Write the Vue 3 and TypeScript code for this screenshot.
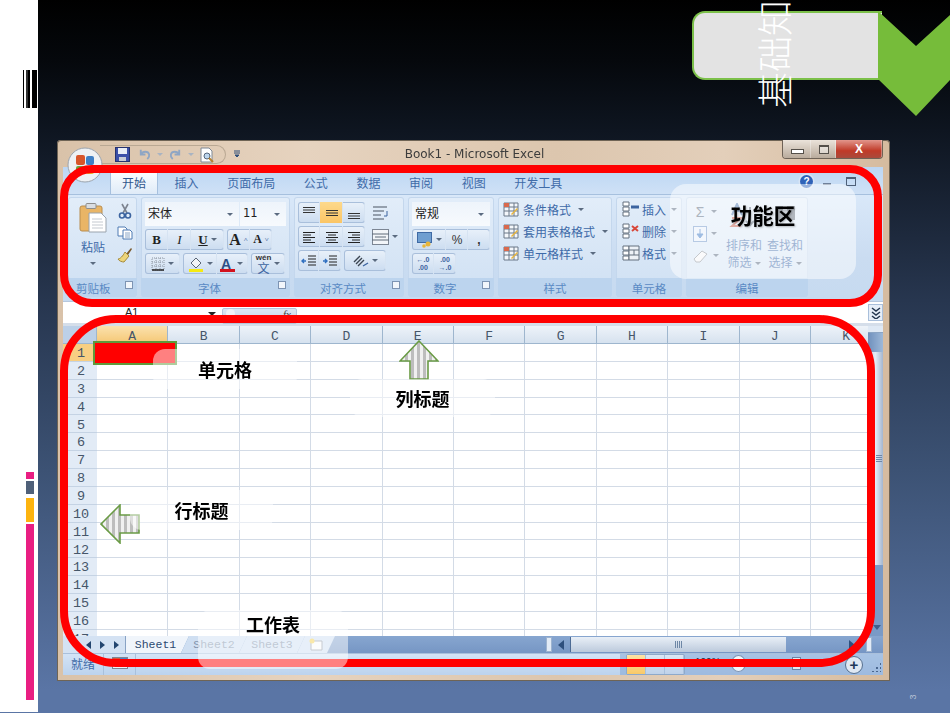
<template>
  <div class="slide">
    <aside class="rail">
      <div class="barcode"></div>
      <div class="bars">
        <span class="bar pink-sm"></span>
        <span class="bar slate"></span>
        <span class="bar amber"></span>
        <span class="bar pink-lg"></span>
      </div>
    </aside>

    <main class="stage">
      <section class="window">
        <header class="titlebar">
          <div class="orb">
            <svg viewBox="0 0 36 36" width="36" height="36">
              <circle cx="18" cy="18" r="17" fill="#eef1f4" stroke="#9aa3ad" />
              <rect x="9" y="8" width="9" height="10" rx="2" fill="#d8552a" />
              <rect x="19" y="9" width="8" height="9" rx="2" fill="#3f7fc4" />
              <rect x="9" y="19" width="9" height="8" rx="2" fill="#6ea33c" />
              <rect x="19" y="19" width="8" height="8" rx="2" fill="#e9b32c" />
            </svg>
          </div>
          <div class="qat">
            <svg viewBox="0 0 15 15" width="15" height="15">
              <rect x="0.5" y="0.5" width="14" height="14" fill="#3b4fa8" stroke="#26336f" />
              <rect x="3" y="1" width="9" height="6" fill="#e8edf6" />
              <rect x="4" y="10" width="7" height="4" fill="#c7ccd6" />
            </svg>
            <svg class="qat-undo" viewBox="0 0 14 14" width="13" height="13">
              <path d="M3 2v5h5M3 7c2-4 8-4 9 0 .5 2-1 4-2 5" fill="none" stroke="#8fa6c4" stroke-width="2" />
            </svg>
            <i class="caret soft qat-caret"></i>
            <svg class="qat-redo" viewBox="0 0 14 14" width="13" height="13">
              <path d="M11 2v5H6M11 7C9 3 3 3 2 7c-.5 2 1 4 2 5" fill="none" stroke="#8fa6c4" stroke-width="2" />
            </svg>
            <i class="caret soft qat-caret"></i>
            <svg class="qat-preview" viewBox="0 0 16 16" width="16" height="16">
              <path d="M2 1h8l3 3v11H2z" fill="#fff" stroke="#7f8894" />
              <circle cx="8" cy="9" r="3" fill="#bcd6ee" stroke="#56677c" />
              <path d="M10 11l4 4" stroke="#b5802f" stroke-width="2" />
            </svg>
          </div>
          <svg class="qat-more" viewBox="0 0 8 8" width="8" height="8">
            <path d="M1 1h6M1 3h6M2 5h4l-2 2z" stroke="#2f4f7a" fill="#2f4f7a" stroke-width="1" />
          </svg>
          <span class="app-title">Book1 - Microsoft Excel</span>
          <div class="win-controls">
            <span class="win-btn"><i class="win-min"></i></span>
            <span class="win-btn narrow"><i class="win-max"></i></span>
            <span class="win-btn close">X</span>
          </div>
        </header>

        <nav class="tabs">
          <span v-for="(tab, i) in tabs" :key="tab" class="tab" :class="{ active: i === 0 }">{{ tab }}</span>
          <div class="tabs-right">
            <span class="help">?</span>
            <span class="tab-min"></span>
            <span class="tab-restore"></span>
          </div>
        </nav>

        <div class="ribbon">
          <section class="group w-clip">
            <div class="group-body clip-body">
              <div class="paste">
                <svg viewBox="0 0 28 30" width="28" height="30">
                  <rect x="1" y="3" width="22" height="25" rx="2" fill="#e9b566" stroke="#b98d4f" />
                  <rect x="7" y="0.5" width="10" height="5" rx="1" fill="#d9dde2" stroke="#8d8d8d" />
                  <path d="M10 10h12l5 5v14H10z" fill="#fff" stroke="#9aa3ad" />
                  <path d="M13 16h10M13 19h11M13 22h11M13 25h11" stroke="#c4c9d0" />
                </svg>
                <span class="paste-label">粘贴</span>
                <i class="caret"></i>
              </div>
              <div class="clip-tools">
                <svg viewBox="0 0 14 16" width="14" height="16">
                  <path d="M4 1l5 9M10 1L5 10" stroke="#7d8490" stroke-width="1.6" />
                  <circle cx="4" cy="12.5" r="2.5" fill="none" stroke="#3c64a0" stroke-width="1.6" />
                  <circle cx="10" cy="12.5" r="2.5" fill="none" stroke="#3c64a0" stroke-width="1.6" />
                </svg>
                <svg viewBox="0 0 16 14" width="16" height="14">
                  <path d="M1 1h7l2 2v7H1z" fill="#fff" stroke="#4f7bb3" />
                  <path d="M6 4h7l2 2v7H6z" fill="#fff" stroke="#4f7bb3" />
                  <path d="M8 7h5M8 9h5M8 11h5" stroke="#8aa6c8" />
                </svg>
                <svg viewBox="0 0 16 16" width="16" height="16">
                  <path d="M9 7l5-6 1 1-4 6z" fill="#7a5a2e" />
                  <path d="M8 5l4 4-5 6c-2 0-5-1-6-3 2 0 5-3 7-7z" fill="#ecd57a" stroke="#a58a3a" />
                </svg>
              </div>
            </div>
            <footer class="group-foot spread"><span>剪贴板</span><i class="launcher"></i></footer>
          </section>

          <section class="group w-font">
            <div class="group-body stack">
              <div class="combo-row">
                <div class="combo name"><span>宋体</span><i class="caret"></i></div>
                <div class="combo size"><span>11</span><i class="caret"></i></div>
              </div>
              <div class="ctl-row">
                <div class="seg">
                  <span class="cell w23 fmt bold">B</span>
                  <span class="cell w23 fmt italic">I</span>
                  <span class="cell w33 fmt under">U<i class="caret"></i></span>
                </div>
                <div class="seg">
                  <span class="cell w23 fmt big">A<sup>˄</sup></span>
                  <span class="cell w22 fmt small">A<sup>˅</sup></span>
                </div>
              </div>
              <div class="ctl-row">
                <div class="seg">
                  <span class="cell w35">
                    <svg viewBox="0 0 14 14" width="14" height="14">
                      <path d="M1 1h12v12H1zM5 1v12M9 1v12M1 5h12M1 9h12" fill="none" stroke="#8d96a2" stroke-dasharray="1 1" />
                      <path d="M1 13h12" stroke="#222" stroke-width="1.4" />
                    </svg>
                    <i class="caret"></i>
                  </span>
                </div>
                <div class="seg">
                  <span class="cell w34">
                    <svg viewBox="0 0 16 16" width="16" height="16">
                      <path d="M3 7l5-5 5 5-5 5z" fill="#f2f4f7" stroke="#5a6676" />
                      <rect x="1" y="13" width="14" height="3" fill="#f5ea12" />
                    </svg>
                    <i class="caret"></i>
                  </span>
                  <span class="cell w31 color-a"><b>A</b><i class="red-line"></i><i class="caret"></i></span>
                </div>
                <div class="seg">
                  <span class="cell w34 wen">
                    <span class="wen-text"><em>wén</em><b>文</b></span>
                    <i class="caret"></i>
                  </span>
                </div>
              </div>
            </div>
            <footer class="group-foot center-foot"><span>字体</span><i class="launcher"></i></footer>
          </section>

          <section class="group w-align">
            <div class="group-body stack">
              <div class="ctl-row">
                <div class="seg">
                  <span class="cell w22">
                    <svg viewBox="0 0 14 14" width="14" height="14"><path d="M1 1.5h12M1 4h12M1 6.5h12" stroke="#333" /></svg>
                  </span>
                  <span class="cell w23 on">
                    <svg viewBox="0 0 14 14" width="14" height="14"><path d="M1 4.5h12M1 7h12M1 9.5h12" stroke="#333" /></svg>
                  </span>
                  <span class="cell w22">
                    <svg viewBox="0 0 14 14" width="14" height="14"><path d="M1 7.5h12M1 10h12M1 12.5h12" stroke="#333" /></svg>
                  </span>
                </div>
                <svg class="loose" viewBox="0 0 17 16" width="17" height="16">
                  <path d="M1 2h14M1 6h11M1 10h8M1 14h11" stroke="#7c8694" stroke-width="1.4" />
                  <path d="M15 6v5h-3" fill="none" stroke="#3c64a0" />
                </svg>
              </div>
              <div class="ctl-row">
                <div class="seg">
                  <span class="cell w22">
                    <svg viewBox="0 0 14 14" width="14" height="14"><path d="M1 2.5h12M1 5h8M1 7.5h12M1 10h8M1 12.5h12" stroke="#222" /></svg>
                  </span>
                  <span class="cell w23">
                    <svg viewBox="0 0 14 14" width="14" height="14"><path d="M1 2.5h12M3 5h8M1 7.5h12M3 10h8M1 12.5h12" stroke="#222" /></svg>
                  </span>
                  <span class="cell w22">
                    <svg viewBox="0 0 14 14" width="14" height="14"><path d="M1 2.5h12M5 5h8M1 7.5h12M5 10h8M1 12.5h12" stroke="#222" /></svg>
                  </span>
                </div>
                <svg class="loose" viewBox="0 0 17 16" width="17" height="16">
                  <rect x="0.5" y="0.5" width="16" height="15" fill="#f2f5f9" stroke="#7c8694" />
                  <path d="M0 5h17M0 11h17M3 8h11" stroke="#5e6a78" />
                </svg>
                <i class="caret"></i>
              </div>
              <div class="ctl-row">
                <div class="seg">
                  <span class="cell w21">
                    <svg viewBox="0 0 16 14" width="16" height="14"><path d="M7 2h8M7 5h8M7 8h8M7 11h8" stroke="#222" /><path d="M5 7H1m2-2L1 7l2 2" fill="none" stroke="#2f6fc0" stroke-width="1.4" /></svg>
                  </span>
                  <span class="cell w22">
                    <svg viewBox="0 0 16 14" width="16" height="14"><path d="M7 2h8M7 5h8M7 8h8M7 11h8" stroke="#222" /><path d="M1 7h4M3 5l2 2-2 2" fill="none" stroke="#2f6fc0" stroke-width="1.4" /></svg>
                  </span>
                </div>
                <div class="seg">
                  <span class="cell w42">
                    <svg viewBox="0 0 16 14" width="16" height="14"><path d="M1 8l6-6M3 10l6-6M5 12l6-6" stroke="#3b4552" stroke-width="1.4" /><path d="M10 12l5-3" stroke="#3c64a0" stroke-width="1.4" /></svg>
                    <i class="caret"></i>
                  </span>
                </div>
              </div>
            </div>
            <footer class="group-foot center-foot"><span>对齐方式</span><i class="launcher"></i></footer>
          </section>

          <section class="group w-number">
            <div class="group-body stack">
              <div class="combo-row">
                <div class="combo full"><span>常规</span><i class="caret"></i></div>
              </div>
              <div class="ctl-row">
                <div class="seg">
                  <span class="cell w34">
                    <svg viewBox="0 0 16 16" width="16" height="16">
                      <rect x="0.5" y="0.5" width="14" height="10" fill="#6f9ed0" stroke="#3f6aa5" />
                      <circle cx="11" cy="12" r="2.5" fill="#e7b53a" />
                      <circle cx="7" cy="14" r="1.8" fill="#e7b53a" />
                    </svg>
                    <i class="caret"></i>
                  </span>
                  <span class="cell w22 pct">%</span>
                  <span class="cell w22 pct bold">,</span>
                </div>
              </div>
              <div class="ctl-row">
                <div class="seg">
                  <span class="cell w22 dec"><em>←.0</em><em>.00</em></span>
                  <span class="cell w22 dec"><em>.00</em><em>→.0</em></span>
                </div>
              </div>
            </div>
            <footer class="group-foot center-foot"><span>数字</span><i class="launcher"></i></footer>
          </section>

          <section class="group w-styles">
            <div class="group-body list">
              <div v-for="item in styleItems" :key="item" class="list-item">
                <svg viewBox="0 0 16 16" width="16" height="16">
                  <path d="M1 2h14v13H1zM1 6h14M1 10h14M6 2v13M11 2v13" fill="#f4f7fb" stroke="#6b7889" />
                  <rect x="1" y="2" width="5" height="4" fill="#d9694d" />
                  <path d="M8 13l6-6 1 1-6 6z" fill="#e9b53a" />
                </svg>
                <span>{{ item }}</span>
                <i class="caret"></i>
              </div>
            </div>
            <footer class="group-foot center-foot solo"><span>样式</span></footer>
          </section>

          <section class="group w-cells">
            <div class="group-body list cells-list">
              <div v-for="item in cellItems" :key="item.label" class="list-item">
                <svg viewBox="0 0 18 16" width="18" height="16">
                  <path d="M1 1h6v4H1zM1 6h6v4H1zM1 11h6v4H1z" fill="#fff" stroke="#65717f" />
                  <path v-if="item.kind === 'add'" d="M9 6h8" stroke="#3c64a0" stroke-width="3" />
                  <path v-else-if="item.kind === 'del'" d="M10 3l6 5M16 3l-6 5" stroke="#d8473a" stroke-width="2" />
                  <path v-else d="M7 1h10v14H7zM7 5h10M7 10h10M12 5v5" fill="#eef2f7" stroke="#65717f" />
                </svg>
                <span>{{ item.label }}</span>
                <i class="caret"></i>
              </div>
            </div>
            <footer class="group-foot center-foot solo"><span>单元格</span></footer>
          </section>

          <section class="group w-edit">
            <div class="group-body edit-body">
              <div class="edit-tools">
                <div class="edit-tool"><span class="sigma">Σ</span><i class="caret"></i></div>
                <div class="edit-tool">
                  <svg viewBox="0 0 14 16" width="14" height="16">
                    <rect x="0.5" y="0.5" width="13" height="15" fill="#e6eefa" stroke="#6e95c8" />
                    <path d="M7 3v7M4 8l3 4 3-4z" fill="#3c78c4" stroke="#3c78c4" />
                  </svg>
                  <i class="caret"></i>
                </div>
                <div class="edit-tool">
                  <svg viewBox="0 0 16 14" width="16" height="14">
                    <path d="M1 10l8-8 5 3-7 8H3z" fill="#f5f5f7" stroke="#8a9099" />
                  </svg>
                  <i class="caret"></i>
                </div>
              </div>
              <div class="edit-big">
                <svg viewBox="0 0 30 24" width="30" height="24">
                  <path d="M3 12L8 1l5 11M5 8h6" fill="none" stroke="#4d78b0" stroke-width="2" />
                  <path d="M3 15h9l-9 8h9" fill="none" stroke="#c05a4a" stroke-width="2" />
                  <path d="M21 4v18m-4-4l4 4 4-4" fill="none" stroke="#5f6d80" stroke-width="2" />
                </svg>
                <span>排序和</span>
                <span>筛选<i class="caret"></i></span>
              </div>
              <div class="edit-big">
                <svg viewBox="0 0 30 24" width="30" height="24">
                  <rect x="5" y="3" width="8" height="14" fill="#646e7c" />
                  <rect x="17" y="3" width="8" height="14" fill="#646e7c" />
                  <path d="M13 7h4v6h-4z" fill="#9aa4b2" />
                </svg>
                <span>查找和</span>
                <span>选择<i class="caret"></i></span>
              </div>
            </div>
            <footer class="group-foot center-foot solo"><span>编辑</span></footer>
          </section>
        </div>

        <div class="formula">
          <span class="name-box">A1</span>
          <i class="name-drop"></i>
          <span class="fx-btn"><i class="fx-dot"></i><em>fx</em></span>
          <span class="formula-more">
            <svg viewBox="0 0 10 12" width="10" height="12"><path d="M1 1l4 3 4-3M1 5l4 3 4-3M1 9l4 3 4-3" fill="none" stroke="#23364f" stroke-width="1.5" /></svg>
          </span>
        </div>

        <div class="sheet-area">
          <div class="sheet">
            <span class="head corner"></span>
            <span v-for="(col, i) in columns" :key="col" class="head col-head" :class="{ sel: i === 0 }">{{ col }}</span>
            <template v-for="row in rows" :key="row">
              <span class="head row-head" :class="{ sel: row === 1 }">{{ row }}</span>
              <span v-for="col in columns" :key="col + row" class="cell-box"></span>
            </template>
          </div>
          <div class="vscroll">
            <span class="v-split"></span>
            <span class="v-up"></span>
            <span class="v-thumb"><i></i></span>
            <span class="v-track"><b></b></span>
          </div>
        </div>

        <div class="sheet-tabs">
          <div class="tab-nav">
            <i class="nav first"></i><i class="nav prev"></i><i class="nav next"></i><i class="nav last"></i>
          </div>
          <span class="sheet-tab current">Sheet1</span>
          <span class="sheet-tab">Sheet2</span>
          <span class="sheet-tab">Sheet3</span>
          <span class="sheet-tab new-tab">
            <svg viewBox="0 0 16 14" width="16" height="14">
              <path d="M3 3h11v9H3z" fill="#f7f8fa" stroke="#8d96a2" />
              <circle cx="4" cy="3" r="2.5" fill="#f2d054" />
            </svg>
          </span>
          <div class="hscroll">
            <span class="h-split"></span>
            <i class="h-left"></i>
            <span class="h-thumb"><b></b></span>
            <i class="h-right"></i>
            <span class="h-split end"></span>
          </div>
        </div>

        <footer class="status">
          <span class="ready">就绪</span>
          <span class="macro">
            <svg viewBox="0 0 16 12" width="16" height="12">
              <rect x="0.5" y="0.5" width="15" height="11" fill="#eef2f7" stroke="#7c8694" />
              <rect x="1" y="1" width="7" height="4" fill="#d8573a" />
              <rect x="8" y="1" width="7" height="4" fill="#4d83c4" />
            </svg>
          </span>
          <div class="status-right">
            <div class="views">
              <span class="view on"></span><span class="view"></span><span class="view"></span>
            </div>
            <span class="zoom-val">100%</span>
            <i class="zoom-knob"></i>
            <i class="zoom-mark"></i>
            <i class="zoom-plus">+</i>
            <i class="grip"></i>
          </div>
        </footer>
      </section>
    </main>

    <!-- things lying over the slide -->
    <div class="badge-box"></div>
    <svg class="chevron" viewBox="0 0 72 105" width="72" height="105">
      <path d="M0 0l38 35L72 4v65l-34 36L0 68z" fill="#76bc3a" />
    </svg>
    <span class="slide-title">基础知</span>
    <span class="page-no">3</span>

    <div class="outline top-outline"></div>
    <div class="outline bottom-outline"></div>

    <div class="picked"></div>

    <svg class="arrow arrow-up" viewBox="0 0 40 40" width="40" height="40">
      <path d="M20 1l19 20H29v18H11V21H1z" fill="url(#stripes)" stroke="#6a9b45" stroke-width="1.6" />
      <defs>
        <pattern id="stripes" width="6" height="6" patternUnits="userSpaceOnUse">
          <rect width="6" height="6" fill="#f0f0f0" />
          <rect width="3" height="6" fill="#bdbdbd" />
        </pattern>
      </defs>
    </svg>
    <svg class="arrow arrow-left" viewBox="0 0 40 40" width="40" height="40">
      <path d="M1 20L20 1v10h19v18H20v10z" fill="url(#stripes)" stroke="#6a9b45" stroke-width="1.6" />
    </svg>

    <div v-for="note in notes" :key="note.text" class="note" :class="note.cls">
      <span>{{ note.text }}</span>
    </div>
  </div>
</template>

<script setup lang="ts">
const tabs = ['开始', '插入', '页面布局', '公式', '数据', '审阅', '视图', '开发工具']
const columns = ['A', 'B', 'C', 'D', 'E', 'F', 'G', 'H', 'I', 'J', 'K']
const rows = Array.from({ length: 17 }, (_, i) => i + 1)

const styleItems = ['条件格式', '套用表格格式', '单元格样式']
const cellItems = [
  { label: '插入', kind: 'add' },
  { label: '删除', kind: 'del' },
  { label: '格式', kind: 'fmt' }
]

const notes = [
  { text: '功能区', cls: 'note-ribbon' },
  { text: '单元格', cls: 'note-cell' },
  { text: '列标题', cls: 'note-col' },
  { text: '行标题', cls: 'note-row' },
  { text: '工作表', cls: 'note-sheet' }
]
</script>

<style>
html,
body {
  margin: 0;
  background: #5a75a5;
}
</style>

<style scoped>
.slide {
  position: relative;
  width: 950px;
  height: 713px;
  display: flex;
  overflow: hidden;
  font-family: 'Noto Sans CJK SC', 'Liberation Sans', sans-serif;
  background: linear-gradient(180deg, #000 0, #05080c 60px, #0e1520 130px, #27364f 300px, #3c5274 470px, #5a75a5 690px);
}

i,
em {
  font-style: normal;
}

svg {
  display: block;
  flex-shrink: 0;
}

/* left rail */
.rail {
  width: 38px;
  height: 712px;
  background: #fff;
  padding-top: 70px;
  box-sizing: border-box;
  flex-shrink: 0;
}

.barcode {
  width: 14px;
  height: 38px;
  margin-left: 23px;
  background: linear-gradient(90deg, #000 0 1.5px, #fff 1.5px 3px, #333 3px 5px, #000 5px 7.5px, #fff 7.5px 9px, #000 9px 14px);
}

.bars {
  margin: 364px 0 0 26px;
  width: 8px;
  display: flex;
  flex-direction: column;
}

.bar {
  display: block;
}

.pink-sm {
  height: 7px;
  background: #e91e82;
}

.slate {
  height: 13px;
  margin-top: 2px;
  background: #4f6079;
}

.amber {
  height: 24px;
  margin-top: 4px;
  background: #fdb40f;
}

.pink-lg {
  height: 176px;
  margin-top: 2px;
  background: #e91e82;
}

/* window */
.stage {
  flex: 1;
  padding: 140px 0 0 19px;
}

.window {
  width: 833px;
  height: 541px;
  box-sizing: border-box;
  padding: 0 7px 6px 6px;
  display: flex;
  flex-direction: column;
  border-radius: 4px 4px 0 0;
  background: linear-gradient(90deg, #d9c2a9, #e6d3bf 30%, #dcc6ae 60%, #e3cfba 80%, #d5bb9f);
  box-shadow: inset 0 0 0 1px #6f6455;
  filter: blur(0.35px);
  color: #3e6aa8;
  font-size: 12px;
}

.titlebar {
  height: 27px;
  position: relative;
  display: flex;
  align-items: center;
  flex-shrink: 0;
}

.orb {
  position: absolute;
  left: 4px;
  top: 7px;
  z-index: 2;
}

.qat {
  position: absolute;
  left: 37px;
  top: 5px;
  height: 19px;
  width: 126px;
  box-sizing: border-box;
  padding-left: 15px;
  display: flex;
  align-items: center;
  border: 1px solid #b9a893;
  border-left: 0;
  border-radius: 0 10px 10px 0;
}

.qat-undo {
  margin-left: 8px;
}

.qat-caret {
  margin-left: 6px;
}

.qat-redo {
  margin-left: 6px;
}

.qat-preview {
  margin-left: 5px;
}

.qat-more {
  position: absolute;
  left: 170px;
  top: 10px;
}

.app-title {
  width: 100%;
  text-align: center;
  padding-left: 3px;
  font-family: 'DejaVu Sans', sans-serif;
  font-size: 12px;
  color: #3c3c3c;
  margin-top: 1px;
}

.win-controls {
  position: absolute;
  right: 0;
  top: 0;
  display: flex;
  height: 18px;
  border: 1px solid #6e6256;
  border-top: 0;
  border-radius: 0 0 4px 4px;
  overflow: hidden;
}

.win-btn {
  width: 28px;
  display: grid;
  place-items: center;
  background: linear-gradient(180deg, #ebe3da, #b9ab9c);
  box-shadow: inset -1px 0 0 #fff5;
}

.win-btn.narrow {
  width: 25px;
}

.win-btn.close {
  width: 46px;
  color: #fff;
  font: 700 12px 'Liberation Sans', sans-serif;
  background: linear-gradient(180deg, #e2968c, #c03a28 60%, #a94a3c);
}

.win-min {
  width: 11px;
  height: 3px;
  margin-top: 5px;
  background: #fff;
  border: 1px solid #55504a;
}

.win-max {
  width: 8px;
  height: 6px;
  border: 1px solid #55504a;
  border-top-width: 2px;
  background: #fff6;
}

/* tabs */
.tabs {
  height: 28px;
  flex-shrink: 0;
  display: flex;
  align-items: flex-end;
  gap: 6.6px;
  padding-left: 48px;
  box-sizing: border-box;
  background: linear-gradient(180deg, #bcd6f3, #cfe1f6);
  border-bottom: 1px solid #a6c0de;
}

.tab {
  height: 23px;
  padding: 0 11px;
  display: flex;
  align-items: center;
  white-space: nowrap;
  color: #3f6ba8;
  font-size: 12px;
}

.tab.active {
  color: #30568c;
  border: 1px solid #a6c0de;
  border-bottom: 0;
  margin: 0 -1px;
  border-radius: 3px 3px 0 0;
  background: linear-gradient(180deg, #fbfdff, #dfebf8);
}

.tabs-right {
  margin-left: auto;
  align-self: center;
  display: flex;
  align-items: center;
  width: 83px;
  height: 28px;
  padding-top: 1px;
  box-sizing: border-box;
  flex-shrink: 0;
}

.help {
  width: 13px;
  height: 13px;
  border-radius: 50%;
  background: #2f62b8;
  box-shadow: 0 0 0 1.5px #d7e4f5;
  color: #fff;
  font: 700 10px/13px 'Liberation Sans', sans-serif;
  text-align: center;
}

.tab-min {
  width: 8px;
  height: 2px;
  margin: 6px 0 0 10px;
  background: #6f8099;
}

.tab-restore {
  width: 8px;
  height: 6px;
  margin-left: 15px;
  border: 1px solid #4d5f78;
  border-top-width: 2px;
}

/* ribbon */
.ribbon {
  height: 106px;
  flex-shrink: 0;
  display: flex;
  gap: 4px;
  padding: 2px 0 0 5px;
  box-sizing: border-box;
  background: linear-gradient(180deg, #d9e8f9, #cadcf1 60%, #c6daf0);
}

.group {
  height: 100px;
  display: flex;
  flex-direction: column;
  box-sizing: border-box;
  border-radius: 3px;
  overflow: hidden;
  background: linear-gradient(180deg, #e2edf9, #cfe0f3);
  box-shadow: inset 0 0 0 1px #c4d7ed;
}

.w-clip {
  width: 69px;
}

.w-font {
  width: 149px;
}

.w-align {
  width: 110px;
}

.w-number {
  width: 86px;
}

.w-styles {
  width: 114px;
}

.w-cells {
  width: 66px;
}

.w-edit {
  width: 122px;
}

.group-body {
  flex: 1;
  min-height: 0;
}

.group-foot {
  height: 19px;
  flex-shrink: 0;
  display: flex;
  align-items: center;
  position: relative;
  background: #bcd4ee;
  color: #5a8ac4;
  font-size: 11.5px;
}

.spread {
  padding-left: 8px;
}

.center-foot {
  justify-content: center;
  padding-right: 12px;
}

.center-foot.solo {
  padding-right: 0;
}

.launcher {
  position: absolute;
  right: 4px;
  top: 3px;
  width: 6px;
  height: 6px;
  background: #f2f6fb;
  border: 1px solid #7d94b3;
}

.caret {
  display: inline-block;
  flex-shrink: 0;
  width: 0;
  height: 0;
  border: 3px solid transparent;
  border-top: 3px solid #5b6b80;
  border-bottom: 0;
}

.caret.soft {
  border-top-color: #a9b4c2;
}

.clip-body {
  display: flex;
  padding: 6px 0 0 11px;
  gap: 10px;
}

.paste {
  display: flex;
  flex-direction: column;
  align-items: center;
  width: 28px;
}

.paste-label {
  margin-top: 5px;
  font-size: 12px;
  line-height: 17px;
  white-space: nowrap;
}

.paste .caret {
  margin-top: 7px;
}

.clip-tools {
  display: flex;
  flex-direction: column;
  align-items: center;
  gap: 7px;
}

.stack {
  display: flex;
  flex-direction: column;
  gap: 3px;
  padding: 5px 4px 0;
}

.combo-row {
  display: flex;
  gap: 1px;
  height: 24px;
}

.combo {
  display: flex;
  align-items: center;
  justify-content: space-between;
  padding: 0 6px 0 3px;
  box-sizing: border-box;
  background: linear-gradient(180deg, #eef4fb, #f7fafd);
  color: #222;
  font-size: 12px;
}

.combo span {
  margin-top: -3px;
}

.combo.name {
  width: 94px;
}

.combo.size {
  width: 46px;
  font-family: 'DejaVu Sans', sans-serif;
  font-size: 11.5px;
}

.combo.full {
  width: 78px;
}

.ctl-row {
  display: flex;
  align-items: center;
  gap: 3px;
  height: 21px;
}

.seg {
  display: flex;
  height: 21px;
  box-sizing: border-box;
  box-shadow: inset 0 0 0 1px #a9bfdb;
  border-radius: 3px;
  overflow: hidden;
  background: linear-gradient(180deg, #e9f1fa, #cbdcf0);
}

.cell {
  display: flex;
  align-items: center;
  justify-content: center;
  gap: 3px;
  box-sizing: border-box;
  box-shadow: inset -1px 0 0 #d6e3f2;
}

.cell.on {
  background: linear-gradient(180deg, #fdd98c, #fbc565);
}

.w21 {
  width: 21px;
}

.w22 {
  width: 22px;
}

.w23 {
  width: 23px;
}

.w31 {
  width: 31px;
}

.w33 {
  width: 33px;
}

.w34 {
  width: 34px;
}

.w35 {
  width: 35px;
}

.w42 {
  width: 42px;
}

.fmt {
  color: #222;
  font-family: 'Liberation Serif', serif;
  font-weight: 700;
  font-size: 13px;
}

.italic {
  font-style: italic;
  font-weight: 400;
}

.under {
  text-decoration: underline;
}

.big {
  font-size: 16px;
}

.small {
  font-size: 12px;
}

.fmt sup {
  font-size: 7px;
  line-height: 0;
  color: #3c64a0;
}

.color-a {
  position: relative;
  justify-content: flex-start;
  padding-left: 4px;
  gap: 6px;
}

.color-a b {
  color: #2d4f86;
  font: 700 14px/14px 'Liberation Sans', sans-serif;
}

.red-line {
  position: absolute;
  left: 3px;
  bottom: 2px;
  width: 15px;
  height: 3px;
  background: #d3121e;
}

.wen-text {
  display: flex;
  flex-direction: column;
  align-items: center;
}

.wen-text em {
  color: #333;
  font: 700 8px/8px 'Liberation Sans', sans-serif;
}

.wen-text b {
  color: #3c64a0;
  font-size: 12px;
  line-height: 12px;
  font-weight: 400;
}

.loose {
  margin-left: 4px;
}

.pct {
  color: #333;
  font: 400 12px 'Liberation Sans', sans-serif;
}

.pct.bold {
  font-weight: 700;
}

.dec {
  flex-direction: column;
  gap: 0;
  color: #3c64a0;
  font: 700 7px/8px 'Liberation Sans', sans-serif;
}

.list {
  display: flex;
  flex-direction: column;
  padding: 1px 0 0 5px;
}

.list-item {
  height: 22px;
  display: flex;
  align-items: center;
  gap: 4px;
  white-space: nowrap;
  font-size: 12px;
}

.list-item .caret {
  margin-left: 3px;
}

.cells-list {
  padding-left: 6px;
}

.cells-list .list-item {
  gap: 2px;
}

.edit-body {
  display: flex;
  padding: 6px 0 0 7px;
}

.edit-tools {
  width: 30px;
  display: flex;
  flex-direction: column;
  gap: 5px;
}

.edit-tool {
  height: 17px;
  display: flex;
  align-items: center;
  gap: 4px;
}

.sigma {
  width: 14px;
  font: 400 14px 'Liberation Sans', sans-serif;
  color: #5b6b80;
  text-align: center;
}

.edit-big {
  width: 40px;
  margin-left: 1px;
  display: flex;
  flex-direction: column;
  align-items: center;
  font-size: 12px;
  line-height: 17px;
  white-space: nowrap;
}

.edit-big svg {
  margin-bottom: 9px;
}

.edit-big .caret {
  margin: 0 0 2px 3px;
}

/* formula bar */
.formula {
  height: 25px;
  flex-shrink: 0;
  position: relative;
  background: #fff;
  border-top: 1px solid #b5c7de;
  box-sizing: border-box;
  border-bottom: 3px solid #d5deea;
}

.name-box {
  position: absolute;
  left: 62px;
  top: 4px;
  color: #222;
  font: 11px 'Liberation Sans', sans-serif;
}

.name-drop {
  position: absolute;
  left: 145px;
  top: 10px;
  border: 4px solid transparent;
  border-top: 4px solid #222;
  border-bottom: 0;
}

.fx-btn {
  position: absolute;
  left: 159px;
  top: 6px;
  width: 75px;
  height: 16px;
  border: 1px solid #b5c7de;
  border-radius: 2px;
  background: linear-gradient(180deg, #dde7f3, #c5d5e8);
  box-sizing: border-box;
}

.fx-btn em {
  position: absolute;
  right: 5px;
  top: -1px;
  font: italic 11px 'Liberation Serif', serif;
  color: #444;
}

.fx-dot {
  position: absolute;
  left: 3px;
  top: 0;
  width: 9px;
  height: 9px;
  border-radius: 50%;
  background: #f0f3f7;
}

.formula-more {
  position: absolute;
  right: 0;
  top: 2px;
  width: 15px;
  height: 17px;
  display: grid;
  place-items: center;
  box-sizing: border-box;
  border: 1px solid #a9bfdb;
  background: #e6eef8;
}

/* sheet */
.sheet-area {
  height: 310px;
  flex-shrink: 0;
  display: flex;
  overflow: hidden;
  background: #fff;
}

.sheet {
  width: 805px;
  height: 310px;
  overflow: hidden;
  display: grid;
  grid-template-columns: 34px repeat(11, 71.4px);
  grid-template-rows: 18px repeat(17, 17.87px);
  flex-shrink: 0;
}

.head {
  display: flex;
  align-items: center;
  justify-content: center;
  box-sizing: border-box;
  color: #465669;
  font-family: 'Liberation Mono', monospace;
  font-size: 13px;
  line-height: 1;
  background: #e4ecf7;
  border-right: 1px solid #9eb6ce;
  border-bottom: 1px solid #9eb6ce;
}

.col-head {
  padding-top: 4px;
  background: linear-gradient(180deg, #eef3f9, #d6e2ef);
}

.col-head.sel {
  background: linear-gradient(180deg, #fbe2ae, #f5c775);
}

.row-head {
  border-right: 0;
  border-bottom: 1px solid #c5d3e4;
  background: #e2ebf6;
  padding: 3px 0 0 2px;
  font-size: 13.5px;
}

.row-head.sel {
  background: #f8cf83;
}

.corner {
  background: #bcd0e8;
}

.cell-box {
  box-sizing: border-box;
  border-right: 1px solid #d3dbe6;
  border-bottom: 1px solid #d3dbe6;
}

.vscroll {
  width: 15px;
  flex-shrink: 0;
  display: flex;
  flex-direction: column;
  background: #7a9ac6;
}

.v-split {
  height: 7px;
  background: #dfe9f5;
  border-bottom: 1px solid #8aa4c4;
  box-sizing: border-box;
}

.v-up {
  height: 19px;
  position: relative;
  background: linear-gradient(90deg, #6f90bd, #9db8d8);
}

.v-thumb {
  height: 213px;
  display: grid;
  align-items: center;
  justify-items: end;
  padding-right: 1px;
  background: linear-gradient(90deg, #c9d7e8, #e3ebf5 50%, #a3b6cf);
  box-sizing: border-box;
}

.v-thumb i {
  width: 6px;
  height: 7px;
  background: repeating-linear-gradient(180deg, #6e87a6 0 1px, transparent 1px 2px);
}

.v-track {
  flex: 1;
  position: relative;
}

.v-track b {
  position: absolute;
  right: 2px;
  bottom: 6px;
  border: 4px solid transparent;
  border-top: 5px solid #3e5f8c;
  border-bottom: 0;
}

/* sheet tabs */
.sheet-tabs {
  height: 17px;
  flex-shrink: 0;
  display: flex;
  align-items: stretch;
  background: linear-gradient(180deg, #87a6d0, #7696c4);
}

.tab-nav {
  width: 63px;
  display: flex;
  align-items: center;
  justify-content: flex-end;
  gap: 9px;
  padding-right: 6px;
  box-sizing: border-box;
  background: #d4e2f3;
  border-right: 1px solid #88a2c4;
}

.nav {
  width: 0;
  height: 0;
  border: 4px solid transparent;
}

.nav.first,
.nav.prev {
  border-right: 5px solid #23456f;
  border-left: 0;
}

.nav.next,
.nav.last {
  border-left: 5px solid #23456f;
  border-right: 0;
}

.sheet-tab {
  width: 66px;
  display: flex;
  align-items: center;
  justify-content: center;
  color: #8092ab;
  font-family: 'Liberation Mono', monospace;
  font-size: 11.5px;
  background: #cfdff2;
  clip-path: polygon(8px 0, 100% 0, 100% 0, calc(100% - 8px) 100%, 0 100%);
  margin-right: -8px;
}

.sheet-tab.current {
  color: #2c4a70;
  background: #f0f5fb;
  clip-path: polygon(0 0, 100% 0, 100% 0, calc(100% - 8px) 100%, 0 100%);
  width: 63px;
  padding-right: 4px;
  box-sizing: border-box;
}

.new-tab {
  width: 38px;
}

.hscroll {
  margin-left: auto;
  display: flex;
  align-items: center;
  width: 337px;
  flex-shrink: 0;
}

.h-split {
  width: 6px;
  height: 15px;
  background: #e2ebf6;
  box-sizing: border-box;
  border: 1px solid #9db3cf;
}

.h-split.end {
  margin-left: 11px;
}

.h-left {
  margin: 0 6px 0 6px;
  border: 5px solid transparent;
  border-right: 6px solid #2e4f7d;
  border-left: 0;
}

.h-right {
  margin-left: 63px;
  border: 5px solid transparent;
  border-left: 6px solid #2e4f7d;
  border-right: 0;
}

.h-thumb {
  width: 216px;
  height: 15px;
  display: grid;
  place-items: center;
  background: linear-gradient(180deg, #e9eff7, #bccadc);
  border-left: 1px solid #4d6b94;
  box-sizing: border-box;
}

.h-thumb b {
  width: 8px;
  height: 7px;
  background: repeating-linear-gradient(90deg, #6e87a6 0 1px, transparent 1px 2px);
}

/* status bar */
.status {
  height: 22px;
  flex-shrink: 0;
  display: flex;
  align-items: center;
  box-sizing: border-box;
  border-top: 1px solid #a9c0dc;
  background: linear-gradient(180deg, #d3e3f6, #bcd3ee);
  color: #3f6ba8;
}

.ready {
  width: 41px;
  height: 21px;
  display: flex;
  align-items: center;
  box-sizing: border-box;
  padding: 0 0 2px 8px;
  font-size: 12px;
  border-right: 1px solid #a9c0dc;
}

.macro {
  width: 32px;
  height: 21px;
  display: grid;
  place-items: center;
  box-sizing: border-box;
  padding-bottom: 4px;
  border-right: 1px solid #a9c0dc;
}

.status-right {
  margin-left: auto;
  width: 263px;
  height: 100%;
  position: relative;
  display: flex;
  align-items: center;
  padding-left: 6px;
  box-sizing: border-box;
  background: linear-gradient(180deg, #a8c3e4, #9dbadf);
}

.views {
  display: flex;
  height: 19px;
  border: 1px solid #8ea9ca;
  border-radius: 2px;
}

.view {
  width: 18px;
  background: linear-gradient(180deg, #dbe7f5, #bfd2ea);
  border-right: 1px solid #a9c0dc;
}

.view.on {
  background: linear-gradient(180deg, #fde3a4, #f9c969);
}

.zoom-val {
  margin-left: 10px;
  padding-bottom: 5px;
  color: #1d2b40;
  font: 10px 'Liberation Sans', sans-serif;
}

.zoom-knob {
  position: absolute;
  left: 111px;
  top: 1px;
  width: 15px;
  height: 17px;
  border-radius: 50%;
  background: #f2f6fb;
  border: 1px solid #7d94b3;
  box-sizing: border-box;
}

.zoom-mark {
  position: absolute;
  left: 172px;
  top: 3px;
  width: 9px;
  height: 13px;
  background: #dfe8f3;
  border: 1px solid #6b84a5;
  box-sizing: border-box;
}

.zoom-plus {
  position: absolute;
  right: 20px;
  top: 2px;
  width: 16px;
  height: 16px;
  border-radius: 50%;
  background: #dfe8f3;
  border: 1px solid #56708f;
  color: #20385a;
  font: 700 15px/15px 'Liberation Sans', sans-serif;
  text-align: center;
}

.grip {
  position: absolute;
  right: 2px;
  bottom: 3px;
  width: 10px;
  height: 10px;
  background: radial-gradient(circle, #4a678f 0 1px, transparent 1.2px) 0 0 / 4px 4px;
  clip-path: polygon(100% 0, 100% 100%, 0 100%);
}

/* overlays on the slide */
.badge-box {
  position: absolute;
  left: 692px;
  top: 11px;
  width: 190px;
  height: 69px;
  box-sizing: border-box;
  background: #e3e3e3;
  border: 2px solid #7cc04a;
  border-right: 0;
  border-radius: 13px 0 0 13px;
}

.chevron {
  position: absolute;
  left: 878px;
  top: 11px;
}

.slide-title {
  position: absolute;
  left: 755px;
  top: 108px;
  width: 110px;
  height: 36px;
  line-height: 36px;
  font-size: 36px;
  white-space: nowrap;
  color: #fff;
  font-weight: 300;
  transform-origin: 0 0;
  transform: rotate(-90deg);
}

.page-no {
  position: absolute;
  left: 910px;
  top: 692px;
  color: #b9c4d6;
  font: 9px/10px 'Liberation Sans', sans-serif;
  transform: rotate(-90deg);
}

.outline {
  position: absolute;
  box-sizing: border-box;
  border: 8px solid #f00;
}

.top-outline {
  left: 60px;
  top: 165px;
  width: 822px;
  height: 142px;
  border-radius: 32px;
}

.bottom-outline {
  left: 60px;
  top: 315px;
  width: 815px;
  height: 352px;
  border-radius: 56px;
}

.picked {
  position: absolute;
  left: 93px;
  top: 341px;
  width: 84px;
  height: 24px;
  box-sizing: border-box;
  background: #f00;
  border: 2px solid #5f9a3a;
}

.arrow {
  position: absolute;
}

.arrow-up {
  left: 399px;
  top: 340px;
}

.arrow-left {
  left: 100px;
  top: 504px;
}

.note {
  position: absolute;
  display: flex;
  align-items: center;
  justify-content: center;
  background: rgba(255, 255, 255, 0.5);
  border-radius: 12px;
  color: #000;
  font-weight: 700;
  font-size: 18px;
  line-height: 1;
}

.note-ribbon {
  left: 670px;
  top: 184px;
  width: 186px;
  height: 95px;
  border-radius: 16px;
  padding: 0 0 33px 0;
  box-sizing: border-box;
  font-size: 21.5px;
  text-shadow: 1px 1px 2px rgba(0, 0, 0, 0.25);
}

.note-cell {
  left: 153px;
  top: 349px;
  width: 144px;
  height: 40px;
}

.note-col {
  left: 350px;
  top: 379px;
  width: 145px;
  height: 38px;
}

.note-row {
  left: 130px;
  top: 490px;
  width: 143px;
  height: 40px;
}

.note-sheet {
  left: 198px;
  top: 610px;
  width: 150px;
  height: 59px;
  padding-bottom: 31px;
  box-sizing: border-box;
}
</style>
